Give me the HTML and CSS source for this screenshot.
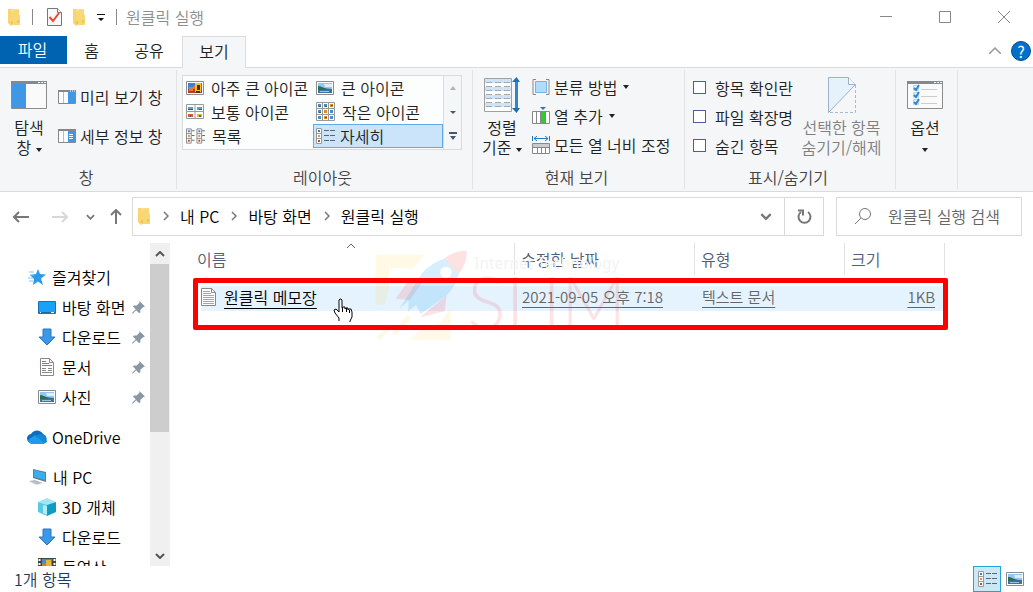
FILE: index.html
```html
<!DOCTYPE html>
<html lang="ko">
<head>
    <meta charset="UTF-8">
    <meta name="viewport" content="width=device-width, initial-scale=1.0">
    <title>원클릭 실행</title>
    <link rel="stylesheet" href="styles.css">
</head>
<body>
    <svg class="sprite" aria-hidden="true">
        <symbol id="i-folder" viewBox="0 0 13 17">
            <path d="M0 0h11v5l1 1v10H3L0 14z" fill="#fbdf8d"/>
            <path d="M3 3l5-2h3v5l1 1v9H5l-2 1z" fill="#f8d775"/>
            <path d="M0 0h3v17l-3-3z" fill="#f9d572"/>
            <path d="M4 12v3M10 11v3" stroke="#e3b34d"/>
        </symbol>
        <symbol id="i-photo" viewBox="0 0 18 14">
            <path d="M.5.5h17v13H.5z" fill="#fff" stroke="#8c8c8c"/>
            <path d="M2 2h14v10H2z" fill="#8fc7f2"/>
            <path d="M8 3h8v3H9z" fill="#d9effc"/>
            <path d="M2 5c4 0 5 3 14 3v2H2z" fill="#2d6b4f"/>
            <path d="M2 9l14-1v4H2z" fill="#3c72a8"/>
            <path d="M4 10h9v1H4z" fill="#9cc4e4"/>
        </symbol>
        <symbol id="i-xlarge" viewBox="0 0 18 14">
            <path d="M.5.5h17v13H.5z" fill="#fff" stroke="#8c8c8c"/>
            <path d="M2 2h14v10H2z" fill="#437fd0"/>
            <path d="M2 8h14v4H2z" fill="#b93c24"/>
            <path d="M3 6h4v4H3zM7 5h2v3H7z" fill="#e87630"/>
            <path d="M9 2h6v9H9z" fill="#f3c427"/>
            <path d="M11 4h3v5h-3zM10 10h4v2h-4z" fill="#4d2d17"/>
        </symbol>
        <symbol id="i-medium" viewBox="0 0 18 16">
            <path d="M.5.5h17v14H.5zM9 .5v14M.5 7.5h17" fill="#fff" stroke="#999"/>
            <path d="M2 3h5v3H2zM11 3h5v3h-5z" fill="#5c9fd5"/>
            <path d="M2 5h5v1H2zM13 5h3v1h-3z" fill="#395f4a"/>
            <path d="M2 10h5v3H2z" fill="#d3602b"/>
            <path d="M11 10h5v3h-5z" fill="#e5bd33"/>
            <path d="M4 11h1v2H4zM13 11h2v2h-2z" fill="#356ca5"/>
        </symbol>
        <symbol id="i-small" viewBox="0 0 19 19">
            <path d="M.5.5h18v18H.5zM6.5.5v18M12.5.5v18M.5 6.5h18M.5 12.5h18" fill="#fff" stroke="#999"/>
            <path d="M2 2h3v3H2zM8 2h3v3H8zM2 8h3v3H2zM14 8h3v3h-3zM2 14h3v3H2zM14 14h3v3h-3z" fill="#4b8bc9"/>
            <path d="M14 2h3v3h-3zM8 8h3v3H8zM8 14h3v3H8z" fill="#d88b2c"/>
            <path d="M3 4h2v1H3zM9 4h2v1H9zM15 3h2v1h-2zM3 10h2v1H3zM9 15h2v1H9z" fill="#425b51"/>
        </symbol>
        <symbol id="i-list" viewBox="0 0 20 16">
            <path d="M.5.5h5v15h-5zM.5 5.5h5M.5 10.5h5M11.5.5h5v15h-5zM11.5 5.5h5M11.5 10.5h5" fill="#fff" stroke="#888"/>
            <path d="M6 2.500h3M6 7.500h3M6 12.500h3M17 2.500h3M17 7.500h3M17 12.500h3" stroke="#666"/>
            <path d="M2 2h2v2H2zM13 2h2v2h-2z" fill="#3f80bd"/>
            <path d="M2 7h2v2H2zM13 7h2v2h-2z" fill="#d99a35"/>
            <path d="M2 12h2v2H2zM13 12h2v2h-2z" fill="#b8502f"/>
        </symbol>
        <symbol id="i-details" viewBox="0 0 19 16">
            <path d="M.5.5h5v15h-5zM.5 5.500h5M.5 10.500h5" fill="#fff" stroke="#999"/>
            <path d="M8 2.500h5M14 2.500h5M8 7.500h5M14 7.500h5M8 12.500h5M14 12.500h5" stroke="#5d6670"/>
            <path d="M2 2h2v2H2z" fill="#3f80bd"/>
            <path d="M2 7h2v2H2z" fill="#d99a35"/>
            <path d="M2 12h2v2H2z" fill="#b8502f"/>
        </symbol>
        <symbol id="i-download" viewBox="0 0 18 18">
            <path d="M5 1h8v8h4l-8 8-8-8h4z" fill="#3b98e8" stroke="#2a78c3"/>
        </symbol>
        <symbol id="i-pin" viewBox="0 0 14 14">
            <path d="M8 0l6 6-2 .7-3 2.800v3L7.500 13 4.500 10 1 13.500H0V13l4-4-3-3 1-1.200h3L8 2z" fill="#8997a5"/>
        </symbol>
        <symbol id="i-chevron" viewBox="0 0 10 6">
            <path d="M1 1l4 4 4-4" fill="none" stroke="currentColor" stroke-width="2"/>
        </symbol>
        <symbol id="i-next" viewBox="0 0 6 10">
            <path d="M1 1l4 4-4 4" fill="none" stroke="#777" stroke-width="1.500"/>
        </symbol>
    </svg>

    <div class="explorer">
        <header class="titlebar">
            <svg class="icon-folder"><use href="#i-folder"/></svg>
            <span class="bar-line"></span>
            <button class="quick check-btn" type="button" aria-label="속성">
                <svg width="15" height="18" viewBox="0 0 15 18">
                    <path d="M.5.5h10l4 4v13H.5z" fill="#f6f8fb" stroke="#777"/>
                    <path d="M10.500.5v4h4" fill="#fff" stroke="#777"/>
                    <path d="M2.500 9l3.500 4 6-8" fill="none" stroke="#f04526" stroke-width="2"/>
                </svg>
            </button>
            <button class="quick" type="button" aria-label="새 폴더"><svg class="icon-folder"><use href="#i-folder"/></svg></button>
            <button class="quick" type="button" aria-label="빠른 실행 도구 모음 사용자 지정">
                <svg width="8" height="7" viewBox="0 0 8 7"><path d="M0 0h8v1H0zM1 4h6L4 7z" fill="#111"/></svg>
            </button>
            <span class="bar-line"></span>
            <h1 class="window-title">원클릭 실행</h1>
            <div class="window-buttons">
                <button type="button" aria-label="최소화"><svg width="12" height="12" viewBox="0 0 12 12"><path d="M0 5.500h12" stroke="#888"/></svg></button>
                <button type="button" aria-label="최대화"><svg width="12" height="12" viewBox="0 0 12 12"><path d="M.5.5h11v11H.5z" fill="none" stroke="#888"/></svg></button>
                <button type="button" aria-label="닫기"><svg width="12" height="12" viewBox="0 0 12 12"><path d="M0 0l12 12M12 0L0 12" stroke="#888"/></svg></button>
            </div>
        </header>

        <nav class="tabs">
            <button class="tab tab-file" type="button">파일</button>
            <button class="tab tab-home" type="button">홈</button>
            <button class="tab tab-share" type="button">공유</button>
            <button class="tab tab-view" type="button">보기</button>
            <div class="tab-tools">
                <button type="button" aria-label="리본 최소화"><svg width="12" height="7" viewBox="0 0 12 7"><path d="M0 7l6-6 6 6" fill="none" stroke="#999" stroke-width="1.500"/></svg></button>
                <button class="help" type="button">?</button>
            </div>
        </nav>

        <section class="ribbon">
            <div class="group group-pane">
                <div class="group-body">
                    <button class="big-btn" type="button">
                        <span class="big-icon">
                            <svg width="36" height="28" viewBox="0 0 36 28">
                                <path d="M.5.5h35v27H.5z" fill="#fafafa" stroke="#8a8c8e"/>
                                <path d="M0 0h36v3H0z" fill="#86898c"/>
                                <path d="M27 1h2v1h-2zM30 1h2v1h-2zM33 1h2v1h-2z" fill="#fff"/>
                                <path d="M1 3h14v24H1z" fill="#3f97e5"/>
                            </svg>
                        </span>
                        <span>탐색<br>창 <i class="caret"></i></span>
                    </button>
                    <div class="pane-list">
                        <button class="small-btn" type="button">
                            <svg width="18" height="14" viewBox="0 0 18 14">
                                <path d="M.5.5h17v13H.5z" fill="#fff" stroke="#858789"/><path d="M0 0h18v2H0z" fill="#858789"/>
                                <path d="M5.500 2v11" stroke="#bbb"/><path d="M10 2h7v11h-7z" fill="#3f97e5"/><path d="M12 1h1M14 1h1M16 1h1" stroke="#fff"/>
                            </svg>
                            미리 보기 창
                        </button>
                        <button class="small-btn" type="button">
                            <svg width="18" height="14" viewBox="0 0 18 14">
                                <path d="M.5.5h17v13H.5z" fill="#fff" stroke="#858789"/><path d="M0 0h18v2H0z" fill="#858789"/>
                                <path d="M5.500 2v11" stroke="#bbb"/><path d="M10 2h7v11h-7z" fill="#3f97e5"/><path d="M11 5.500h4M11 7.500h4M11 9.500h4" stroke="#fff"/>
                            </svg>
                            세부 정보 창
                        </button>
                    </div>
                </div>
                <div class="group-name">창</div>
            </div>

            <div class="group group-layout">
                <div class="group-body">
                    <div class="gallery">
                        <div class="gallery-items">
                            <button type="button"><svg width="18" height="14"><use href="#i-xlarge"/></svg>아주 큰 아이콘</button>
                            <button type="button"><svg width="18" height="14"><use href="#i-photo"/></svg>큰 아이콘</button>
                            <button type="button"><svg width="18" height="16"><use href="#i-medium"/></svg>보통 아이콘</button>
                            <button type="button"><svg width="19" height="19"><use href="#i-small"/></svg>작은 아이콘</button>
                            <button type="button"><svg width="20" height="16"><use href="#i-list"/></svg>목록</button>
                            <button class="selected" type="button"><svg width="19" height="16"><use href="#i-details"/></svg>자세히</button>
                        </div>
                        <div class="gallery-scroll">
                            <button type="button" aria-label="위로"><svg width="6" height="4" viewBox="0 0 6 4"><path d="M0 4h6L3 0z" fill="#abb3bb"/></svg></button>
                            <button type="button" aria-label="아래로"><svg width="6" height="3" viewBox="0 0 6 3"><path d="M0 0h6L3 3z" fill="#48566a"/></svg></button>
                            <button type="button" aria-label="자세히"><svg width="8" height="8" viewBox="0 0 8 8"><path d="M0 0h8v2H0zM1 4h6L4 8z" fill="#48566a"/></svg></button>
                        </div>
                    </div>
                </div>
                <div class="group-name">레이아웃</div>
            </div>

            <div class="group group-current">
                <div class="group-body">
                    <button class="big-btn" type="button">
                        <span class="big-icon">
                            <svg width="36" height="36" viewBox="0 0 36 36">
                                <path d="M.5 1.500h27v33H.5z" fill="#fff" stroke="#a0a0a0"/>
                                <path d="M1 2h26v4H1zM1 10h26v4H1zM1 18h26v4H1zM1 26h26v4H1z" fill="#cde4f8"/>
                                <path d="M2 5.500h24M2 9.500h24M2 13.500h24M2 17.500h24M2 21.500h24M2 25.500h24M2 29.500h24" stroke="#a4a9ad" stroke-dasharray="6 3"/>
                                <path d="M32.500 3v30" stroke="#2f86d0" stroke-width="3"/>
                                <path d="M28 5l4.500-5L36 5zM28 31l4.500 5 3.500-5z" fill="#1f70b9"/>
                            </svg>
                        </span>
                        <span>정렬<br>기준 <i class="caret"></i></span>
                    </button>
                    <div class="row-list">
                        <button class="small-btn" type="button">
                            <svg width="18" height="16" viewBox="0 0 18 16">
                                <path d="M4 .5H1v15h3M14 .5h3v15h-3" fill="none" stroke="#888"/><path d="M3.500 2.500h11v11h-11z" fill="#b3dcfa" stroke="#78b4e2"/>
                            </svg>
                            분류 방법 <i class="caret"></i>
                        </button>
                        <button class="small-btn" type="button">
                            <svg width="18" height="18" viewBox="0 0 18 18">
                                <path d="M8 0h6l-3 3z" fill="#2879c0"/><path d="M.5 4.500h17v12H.5zM4.500 4v12M8.500 4v12M13.500 4v12" fill="#fff" stroke="#888"/><path d="M9 5h4v11H9z" fill="#32c932"/>
                            </svg>
                            열 추가 <i class="caret"></i>
                        </button>
                        <button class="small-btn" type="button">
                            <svg width="18" height="18" viewBox="0 0 18 18">
                                <path d="M.5 0v5M17.500 0v5M2 2.500h14M5 0L2 2.500 5 5M13 0l3 2.500L13 5" fill="none" stroke="#2879b8"/>
                                <path d="M.5 7.500h17v10H.5z" fill="#fff" stroke="#888"/><path d="M1 8h16v3H1z" fill="#ccc"/><path d="M0 11.500h18M5.500 11v6M9.500 11v6M13.500 11v6" stroke="#888"/>
                            </svg>
                            모든 열 너비 조정
                        </button>
                    </div>
                </div>
                <div class="group-name">현재 보기</div>
            </div>

            <div class="group group-show">
                <div class="group-body">
                    <div class="row-list checks">
                        <label><input type="checkbox">항목 확인란</label>
                        <label><input type="checkbox">파일 확장명</label>
                        <label><input type="checkbox">숨긴 항목</label>
                    </div>
                    <button class="big-btn hide-btn" type="button" disabled>
                        <span class="big-icon">
                            <svg width="28" height="36" viewBox="0 0 28 36">
                                <path d="M.5 35.500V.5h20l7 7z" fill="#e5f1fb"/>
                                <path d="M.5 35.500V.5h20l7 7-27 28" fill="none" stroke="#9fb0ca"/>
                                <path d="M20.500.5v7h7" fill="#f5f9fd" stroke="#9fb0ca"/>
                                <path d="M27.500 8v27.500H1" fill="none" stroke="#a9b9d2" stroke-dasharray="3 2"/>
                            </svg>
                        </span>
                        <span>선택한 항목<br>숨기기/해제</span>
                    </button>
                </div>
                <div class="group-name">표시/숨기기</div>
            </div>

            <div class="group group-options">
                <div class="group-body">
                    <button class="big-btn" type="button">
                        <span class="big-icon">
                            <svg width="36" height="28" viewBox="0 0 36 28">
                                <path d="M.5.5h35v27H.5z" fill="#fafafa" stroke="#8a8c8e"/>
                                <path d="M0 0h36v3H0z" fill="#86898c"/>
                                <path d="M27 1h2v1h-2zM30 1h2v1h-2zM33 1h2v1h-2z" fill="#fff"/>
                                <path d="M6.500 4.500h5v5h-5zM6.500 11.500h5v5h-5zM6.500 18.500h5v5h-5z" fill="#e4f0fa" stroke="#bcd5ea"/>
                                <path d="M7 7l2 2 3-5M7 14l2 2 3-5M7 21l2 2 3-5" fill="none" stroke="#2c86d2" stroke-width="2"/>
                                <path d="M14 8.500h16M14 15.500h16M14 22.500h16" stroke="#ccc"/>
                            </svg>
                        </span>
                        <span>옵션<br><i class="caret"></i></span>
                    </button>
                </div>
            </div>
        </section>

        <section class="location">
            <div class="history">
                <button type="button" aria-label="뒤로"><svg width="16" height="12" viewBox="0 0 16 12"><path d="M16 6H1M6 1L1 6l5 5" fill="none" stroke="#777" stroke-width="2"/></svg></button>
                <button type="button" aria-label="앞으로"><svg width="16" height="12" viewBox="0 0 16 12"><path d="M0 6h15M10 1l5 5-5 5" fill="none" stroke="#d8d8d8" stroke-width="2"/></svg></button>
                <button class="recent" type="button" aria-label="최근 위치"><svg width="9" height="6"><use href="#i-chevron"/></svg></button>
                <button type="button" aria-label="위로"><svg width="12" height="15" viewBox="0 0 12 15"><path d="M6 15V1M1 6l5-5 5 5" fill="none" stroke="#777" stroke-width="2"/></svg></button>
            </div>
            <div class="address">
                <svg class="icon-folder"><use href="#i-folder"/></svg>
                <svg class="next" width="6" height="10"><use href="#i-next"/></svg>
                <a href="#">내 PC</a>
                <svg class="next" width="6" height="10"><use href="#i-next"/></svg>
                <a href="#">바탕 화면</a>
                <svg class="next" width="6" height="10"><use href="#i-next"/></svg>
                <a href="#">원클릭 실행</a>
                <button class="address-drop" type="button" aria-label="이전 위치"><svg width="12" height="7"><use href="#i-chevron"/></svg></button>
                <button class="refresh" type="button" aria-label="새로 고침">
                    <svg width="15" height="15" viewBox="0 0 15 15"><path d="M4 3a6 6 0 1 0 7 0" fill="none" stroke="#777" stroke-width="2"/><path d="M1 1.500h5v5" fill="none" stroke="#777" stroke-width="2"/></svg>
                </button>
            </div>
            <label class="search">
                <svg width="16" height="16" viewBox="0 0 16 16"><circle cx="10" cy="6" r="5.500" fill="none" stroke="#777"/><path d="M6 10l-6 6" stroke="#777"/></svg>
                <input type="text" placeholder="원클릭 실행 검색" aria-label="원클릭 실행 검색">
            </label>
        </section>

        <main class="content">
            <nav class="tree">
                <ul>
                    <li class="top"><svg width="18" height="16" viewBox="0 0 18 16"><path d="M10 0l2 5 6 .5-5 4 2 6.500-5-3.500L5 16l1-6-4-4 6-1z" fill="#2a9be8"/><path d="M1 3h5M2 6h4M0 9h5M1 12h4" stroke="#83c5f3"/></svg><a href="#">즐겨찾기</a></li>
                    <li><svg width="18" height="13" viewBox="0 0 18 13"><path d="M.5.5h17v12H.5z" fill="#1da1f5" stroke="#1673bd"/><path d="M1 11.500h16" stroke="#146cb0"/><path d="M2 11.500h1M13 11.500h3" stroke="#fff"/></svg><a href="#">바탕 화면</a><svg class="pin"><use href="#i-pin"/></svg></li>
                    <li><svg width="18" height="18"><use href="#i-download"/></svg><a href="#">다운로드</a><svg class="pin"><use href="#i-pin"/></svg></li>
                    <li><svg width="18" height="18" viewBox="0 0 18 18"><path d="M2.500.5h9l4 4v13h-13z" fill="#fff" stroke="#888"/><path d="M11.500.5v4h4" fill="none" stroke="#888"/><path d="M4 3.500h4M4 5.500h7M4 7.500h10" stroke="#279be1"/><path d="M4 10.500h4M10 10.500h4M4 12.500h4M10 12.500h4M4 14.500h10" stroke="#888"/></svg><a href="#">문서</a><svg class="pin"><use href="#i-pin"/></svg></li>
                    <li><svg width="18" height="14"><use href="#i-photo"/></svg><a href="#">사진</a><svg class="pin"><use href="#i-pin"/></svg></li>
                </ul>
                <ul>
                    <li class="top"><svg class="cloud" width="21" height="14" viewBox="0 0 21 14"><path d="M5 13a4.500 4.500 0 0 1-1-9 7 7 0 0 1 12 0 5 5 0 0 1 1 9z" fill="#0f6cc0"/><path d="M1 10l7-5 11 7-2 2H5q-3 0-4-4z" fill="#1c9ceb"/><path d="M8 6l5-2 6 2 1 6-2 1z" fill="#1486d8"/></svg><a href="#">OneDrive</a></li>
                </ul>
                <ul>
                    <li class="top"><svg width="19" height="17" viewBox="0 0 19 17"><path d="M5 0l13 3v10L5 9z" fill="#687887"/><path d="M6 1l11 3v7L6 8z" fill="#36b0f2"/><path d="M1 12l6-1 8 3-6 2z" fill="#b6bcc2"/><path d="M1 13l8 3 6-2" fill="none" stroke="#eee"/></svg><a href="#">내 PC</a></li>
                    <li><svg width="18" height="18" viewBox="0 0 18 18"><path d="M0 4l9-4 9 4-9 4z" fill="#a2e6f3"/><path d="M0 4l9 3v11l-9-4z" fill="#57cbe4"/><path d="M9 7l9-3v10l-9 4z" fill="#109bc3"/><path d="M5 7l4 1v9l-4-2z" fill="#b5edf5"/></svg><a href="#">3D 개체</a></li>
                    <li><svg width="18" height="18"><use href="#i-download"/></svg><a href="#">다운로드</a></li>
                    <li><svg width="18" height="18" viewBox="0 0 18 18"><path d="M0 0h18v18H0z" fill="#444"/><path d="M4 1h10v16H4z" fill="#4a8bd0"/><path d="M4 5h10v4H4z" fill="#c47d35"/><path d="M8 2h5v6H8z" fill="#e5b43a"/><path d="M1.500 1v16M16.500 1v16" stroke="#fff" stroke-width="2" stroke-dasharray="2 2"/></svg><a href="#">동영상</a></li>
                </ul>
            </nav>
            <div class="scrollbar">
                <button class="flip" type="button" aria-label="위로 스크롤"><svg width="10" height="6"><use href="#i-chevron"/></svg></button>
                <div class="thumb"></div>
                <button type="button" aria-label="아래로 스크롤"><svg width="10" height="6"><use href="#i-chevron"/></svg></button>
            </div>

            <div class="files">
                <table>
                    <colgroup>
                        <col class="col-name">
                        <col class="col-date">
                        <col class="col-type">
                        <col class="col-size">
                    </colgroup>
                    <thead>
                        <tr>
                            <th><button type="button">이름<svg class="sort" width="10" height="6" viewBox="0 0 10 6"><path d="M1 5l4-4 4 4" fill="none" stroke="#666"/></svg></button></th>
                            <th><button type="button">수정한 날짜</button></th>
                            <th><button type="button">유형</button></th>
                            <th><button type="button">크기</button></th>
                        </tr>
                    </thead>
                    <tbody>
                        <tr>
                            <td>
                                <a class="file-name" href="#">
                                    <svg width="15" height="18" viewBox="0 0 15 18"><path d="M.5.5h10l4 4v13H.5z" fill="#fff" stroke="#888"/><path d="M10.500.5v4h4" fill="none" stroke="#888"/><path d="M2 3.500h7M2 5.500h8M2 7.500h11M2 9.500h11M2 11.500h11M2 13.500h11M2 15.500h11" stroke="#a5a5a5"/></svg>
                                    <span>원클릭 메모장</span>
                                </a>
                            </td>
                            <td><u>2021-09-05 오후 7:18</u></td>
                            <td><u>텍스트 문서</u></td>
                            <td><u>1KB</u></td>
                        </tr>
                    </tbody>
                </table>

                <svg class="watermark" viewBox="540 0 780 330">
                    <path d="M557 50h148l-35 40h-73v60l-12 50h-28zM660 305l35-32 55-18 32-45v95z" fill="#ffd24a" opacity=".14"/>
                    <path d="M565 303l38-42M612 288l46-52" stroke="#ffd24a" stroke-width="14" opacity=".14"/>
                    <path d="M617 182l35-50 52-8-45 62zM690 238l80-66-6 48z" fill="#f02020" opacity=".13"/>
                    <path d="M628 212l30-46 38-60q28-32 66-44l44 46q-6 32-34 62l-80 58-14-26-24 18 2-32z" fill="#35aef2" opacity=".2"/>
                    <path d="M762 62q30-24 68-24 2 38-24 70z" fill="#f02020" opacity=".13"/>
                    <circle cx="768" cy="103" r="17" fill="#fff"/>
                    <text class="mark-small" x="853" y="93">Internet Technology</text>
                    <text class="mark-big" x="832" y="273">SLIM</text>
                </svg>
                <div class="red-box"></div>
                <svg class="cursor" width="22" height="26" viewBox="0 0 22 26">
                    <path d="M6 23v-3l-4-5-1-3 2-1 3 3V2l1-1h1l1 1v8l1-1h2v2l1-1h2v2l1-1h2l1 3v5l-2 4v1" fill="#fff" stroke="#000"/>
                    <path d="M9.500 9v5M13.500 10v4M16.500 12v3" stroke="#000"/>
                </svg>
            </div>
        </main>

        <footer class="status">
            <span>1개 항목</span>
            <div class="status-views">
                <button class="selected" type="button" aria-label="자세히"><svg width="19" height="16"><use href="#i-details"/></svg></button>
                <button type="button" aria-label="큰 아이콘"><svg width="18" height="14"><use href="#i-photo"/></svg></button>
            </div>
        </footer>
    </div>
</body>
</html>
```
FILE: styles.css
```css
* {
    box-sizing: border-box;
}

body {
    margin: 0;
    font-family: "Noto Sans CJK KR", sans-serif;
    font-size: 16px;
    font-weight: 350;
    line-height: 20px;
    color: #222;
    background-color: #fff;
}

button {
    display: flex;
    align-items: center;
    justify-content: center;
    padding: 0;
    border: none;
    background: none;
    font: inherit;
    color: inherit;
    white-space: nowrap;
}

svg {
    flex: none;
}

a {
    color: inherit;
    text-decoration: none;
}

.sprite {
    display: none;
}

.icon-folder {
    width: 13px;
    height: 17px;
}

.caret {
    display: inline-block;
    border: 3px solid transparent;
    border-top: 4px solid #222;
    border-bottom: none;
    vertical-align: middle;
}

.explorer {
    display: flex;
    flex-direction: column;
    height: 100vh;
    overflow: hidden;
}

/* title bar */
.titlebar {
    display: flex;
    align-items: center;
    height: 36px;
    padding: 0 0 2px 8px;
    gap: 11px;
}

.bar-line {
    width: 1px;
    height: 16px;
    background-color: #888;
}

.check-btn {
    margin-left: 3px;
}

.window-title {
    margin: 0 0 0 -2px;
    font-size: 16px;
    font-weight: 350;
    color: #8e8e8e;
}

.window-buttons {
    display: flex;
    margin-left: auto;
}

.window-buttons button {
    width: 59px;
    height: 34px;
}

/* tabs */
.tabs {
    display: flex;
    height: 32px;
    border-bottom: 1px solid #dadbdc;
}

.tab {
    height: 28px;
}

.tab-file {
    width: 67px;
    padding: 0 2px 2px 0;
    background-color: #0063b1;
    color: #fff;
}

.tab-home {
    width: 49px;
}

.tab-share {
    width: 66px;
}

.tab-view {
    width: 64px;
    height: 32px;
    padding-bottom: 4px;
    border: 1px solid #dadbdc;
    border-bottom: none;
    background-color: #f5f6f7;
}

.tab-tools {
    display: flex;
    align-items: center;
    gap: 10px;
    margin-left: auto;
    padding: 0 2px 2px 0;
}

.help {
    width: 20px;
    height: 20px;
    border: 1px solid #084a91;
    border-radius: 50%;
    background-color: #0070cb;
    color: #fff;
    font-weight: 400;
}

/* ribbon */
.ribbon {
    display: flex;
    height: 124px;
    padding: 2px 0;
    background-color: #f5f6f7;
    border-bottom: 1px solid #dadbdc;
}

.group {
    display: flex;
    flex-direction: column;
    padding: 5px 5px 0;
    border-right: 1px solid #e2e3e4;
}

.group-body {
    display: flex;
    flex: 1;
    align-items: flex-start;
}

.group-name {
    padding-right: 4px;
    line-height: 24px;
    text-align: center;
    color: #444;
}

.group-pane {
    width: 177px;
}

.group-layout {
    width: 296px;
}

.group-current {
    width: 212px;
}

.group-show {
    width: 211px;
}

.group-options {
    width: 62px;
}

.big-btn {
    flex-direction: column;
    width: 48px;
}

.big-icon {
    display: flex;
    align-items: center;
    height: 40px;
    margin-bottom: 2px;
}

.small-btn {
    height: 26px;
    justify-content: flex-start;
    gap: 4px;
    padding-bottom: 2px;
}

.pane-list {
    display: flex;
    flex-direction: column;
    gap: 13px;
    padding: 10px 0 0 5px;
}

.row-list {
    display: flex;
    flex-direction: column;
    gap: 3px;
    padding-left: 6px;
}

.row-list .caret {
    margin-left: 2px;
}

.checks {
    padding-left: 3px;
}

.checks label {
    display: flex;
    align-items: center;
    gap: 9px;
    height: 26px;
    padding-bottom: 1px;
    white-space: nowrap;
}

.checks input {
    appearance: none;
    width: 13px;
    height: 13px;
    margin: 0;
    border: 1px solid #4a5f9e;
    background-color: #fff;
}

.hide-btn {
    width: 106px;
    color: #808080;
}

.gallery {
    display: flex;
    flex: 1;
    height: 75px;
    margin-right: 5px;
    border: 1px solid #dadbdc;
    background-color: #fcfdfd;
}

.gallery-items {
    display: grid;
    grid-template-columns: 1fr 1fr;
    flex: 1;
    grid-auto-rows: 24px;
}

.gallery-items button {
    justify-content: flex-start;
    gap: 7px;
    padding: 0 0 1px 3px;
}

.gallery-items svg {
    max-width: 19px;
}

.gallery-items .selected {
    padding-left: 2px;
    gap: 5px;
    border: 1px solid #66a7e8;
    background-color: #cce4fa;
}

.gallery-scroll {
    display: grid;
    grid-auto-rows: 24px;
    width: 18px;
    border-left: 1px solid #dadbdc;
    background-color: #f5f6f7;
}

/* address row */
.location {
    display: flex;
    align-items: flex-start;
    gap: 12px;
    height: 51px;
    padding: 5px 11px 0 13px;
}

.history {
    display: flex;
    align-items: center;
    gap: 23px;
    height: 39px;
    margin-right: -2px;
    color: #777;
}

.recent {
    margin: 0 -8px 0 -5px;
}

.address {
    display: flex;
    flex: 1;
    align-items: center;
    height: 39px;
    padding: 0 0 1px 5px;
    border: 1px solid #d9d9d9;
    color: #000;
}

.next {
    margin: 0 11px 0 12px;
}

.address-drop {
    width: 36px;
    height: 37px;
    margin-left: auto;
    color: #777;
}

.refresh {
    width: 39px;
    height: 37px;
    border-left: 1px solid #d9d9d9;
}

.search {
    display: flex;
    align-items: center;
    gap: 17px;
    width: 186px;
    height: 39px;
    padding: 0 0 2px 18px;
    border: 1px solid #d9d9d9;
}

.search input {
    width: 100%;
    min-width: 0;
    padding: 0;
    border: none;
    outline: none;
    background: none;
    font: inherit;
}

.search input::placeholder {
    color: #666;
    opacity: 1;
}

/* folders and files */
.content {
    display: flex;
    flex: 1;
    min-height: 0;
}

.tree {
    width: 150px;
    padding-top: 19px;
    overflow: hidden;
    color: #000;
}

.tree ul {
    margin: 0 0 10px;
    padding: 0;
    list-style: none;
}

.tree li {
    display: flex;
    align-items: center;
    gap: 6px;
    height: 30px;
    padding: 0 5px 0 38px;
    white-space: nowrap;
}

.tree .top {
    padding-left: 28px;
}

.tree .cloud {
    margin: 0 -2px 0 -1px;
}

.tree .pin {
    width: 13px;
    height: 13px;
    margin-left: auto;
}

.scrollbar {
    display: flex;
    flex-direction: column;
    width: 20px;
    background-color: #f0f0f0;
    color: #555;
}

.scrollbar button {
    height: 21px;
}

.scrollbar .flip svg {
    transform: rotate(180deg);
}

.thumb {
    height: 168px;
    margin: 0 1px 0 0;
    background-color: #cdcdcd;
}

.thumb + button {
    margin-top: auto;
}

.files {
    position: relative;
    flex: 1;
    padding-left: 21px;
}

table {
    width: 754px;
    table-layout: fixed;
    border-collapse: separate;
    border-spacing: 0;
}

.col-name {
    width: 324px;
}

.col-date {
    width: 180px;
}

.col-type {
    width: 150px;
}

.col-size {
    width: 100px;
}

th {
    padding: 0 0 11px;
    font-weight: 350;
}

th button {
    position: relative;
    justify-content: flex-start;
    width: 100%;
    height: 32px;
    padding: 0 0 1px 6px;
    border-right: 1px solid #e2e2e2;
    color: #4c607a;
}

.sort {
    position: absolute;
    top: 0;
    left: 155px;
}

td {
    height: 25px;
    padding: 0 10px 3px 7px;
    background-color: #e5f3ff;
    font-size: 15px;
    color: #666;
    white-space: nowrap;
}

td:first-child {
    padding-left: 0;
    border-left: 10px solid transparent;
    background-clip: padding-box;
    font-size: 16px;
}

td:last-child {
    text-align: right;
}

u,
.file-name span {
    text-decoration: underline;
    text-decoration-thickness: 1px;
    text-underline-offset: 4px;
}

.file-name {
    display: flex;
    align-items: center;
    gap: 8px;
    color: #000;
}

.watermark {
    position: absolute;
    top: -5px;
    left: 200px;
    width: 260px;
    height: 110px;
    pointer-events: none;
}

.mark-small {
    font-family: "Noto Sans", sans-serif;
    font-size: 46px;
    font-weight: 400;
    fill: #f3f3f3;
}

.mark-big {
    font-family: Lato, sans-serif;
    font-size: 216px;
    font-weight: 300;
    fill: #f02020;
    opacity: 0.12;
}

.red-box {
    position: absolute;
    top: 35px;
    left: 23px;
    width: 755px;
    height: 52px;
    border: 5px solid #fe0000;
    border-radius: 2px;
    pointer-events: none;
}

.cursor {
    position: absolute;
    top: 55px;
    left: 163px;
}

/* status bar */
.status {
    display: flex;
    align-items: center;
    justify-content: space-between;
    height: 26px;
    padding: 0 4px 0 14px;
    color: #1e395b;
}

.status-views {
    display: flex;
}

.status-views button {
    width: 28px;
    height: 26px;
}

.status-views .selected {
    border: 1px solid #26a0da;
    background-color: #cbe8f6;
}
```
